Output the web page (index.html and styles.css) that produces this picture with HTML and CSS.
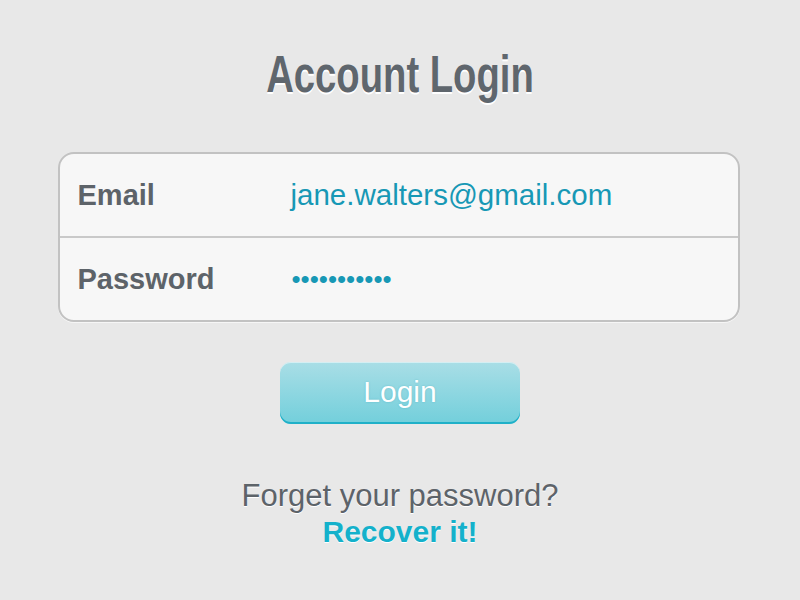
FILE: index.html
```html
<!DOCTYPE html>
<html>
<head>
<meta charset="utf-8">
<link rel="stylesheet" href="styles.css">
</head>
<body>
<div class="page">
  <h1 class="title">Account Login</h1>
  <div class="card">
    <div class="row">
      <span class="label">Email</span>
      <span class="value">jane.walters@gmail.com</span>
    </div>
    <div class="row row-last">
      <span class="label">Password</span>
      <span class="dots">•••••••••••</span>
    </div>
  </div>
  <button class="btn">Login</button>
  <p class="forgot">Forget your password?</p>
  <a class="recover">Recover it!</a>
</div>
</body>
</html>
```
FILE: styles.css
```css
html, body {
  margin: 0;
  padding: 0;
  background: #e8e8e8;
  width: 800px;
  height: 600px;
  overflow: hidden;
}
.page {
  display: flex;
  flex-direction: column;
  align-items: center;
  font-family: "Liberation Sans", Arial, sans-serif;
}
.title {
  margin: 48px 0 0;
  font-family: "Liberation Sans", Arial, sans-serif;
  font-weight: bold;
  font-size: 52px;
  line-height: 52px;
  color: #5f666d;
  text-shadow: 0 2px 0 #ffffff;
  transform: scaleX(0.735);
  white-space: nowrap;
}
.card {
  margin-top: 52px;
  margin-right: 3px;
  width: 678px;
  border: 2px solid #c2c2c2;
  border-radius: 16px;
  background: #f7f7f7;
  box-shadow: 0 1px 0 rgba(255,255,255,0.6);
}
.row {
  display: flex;
  align-items: center;
  height: 82px;
  padding-left: 18px;
  border-bottom: 2px solid #c9c9c9;
}
.row-last {
  border-bottom: none;
}
.label {
  width: 213px;
  font-weight: bold;
  font-size: 29px;
  line-height: 34px;
  color: #5d6369;
}
.value {
  font-size: 29.5px;
  line-height: 34px;
  color: #1798b5;
}
.dots {
  font-size: 26px;
  line-height: 34px;
  color: #1798b5;
  letter-spacing: 0;
  padding-left: 1px;
}
.btn {
  margin-top: 40px;
  width: 240px;
  height: 62px;
  border: none;
  border-radius: 11px;
  background: linear-gradient(#a9dee6, #72cfdb);
  box-shadow: inset 0 -2px 0 #1fb0c8, inset 0 1px 0 rgba(255,255,255,0.5);
  color: #ffffff;
  font-family: "Liberation Sans", Arial, sans-serif;
  font-size: 30px;
  line-height: 34px;
  padding: 0 0 2px;
  text-shadow: 0 0 2px rgba(40,150,170,0.4);
}
.forgot {
  margin: 54px 0 0;
  font-size: 31px;
  line-height: 36px;
  color: #5d6369;
  text-shadow: 0 1px 0 #ffffff;
}
.recover {
  margin-top: 0;
  font-weight: bold;
  font-size: 30px;
  line-height: 36px;
  color: #14b1cb;
  text-shadow: 0 1px 0 #ffffff;
}
```
